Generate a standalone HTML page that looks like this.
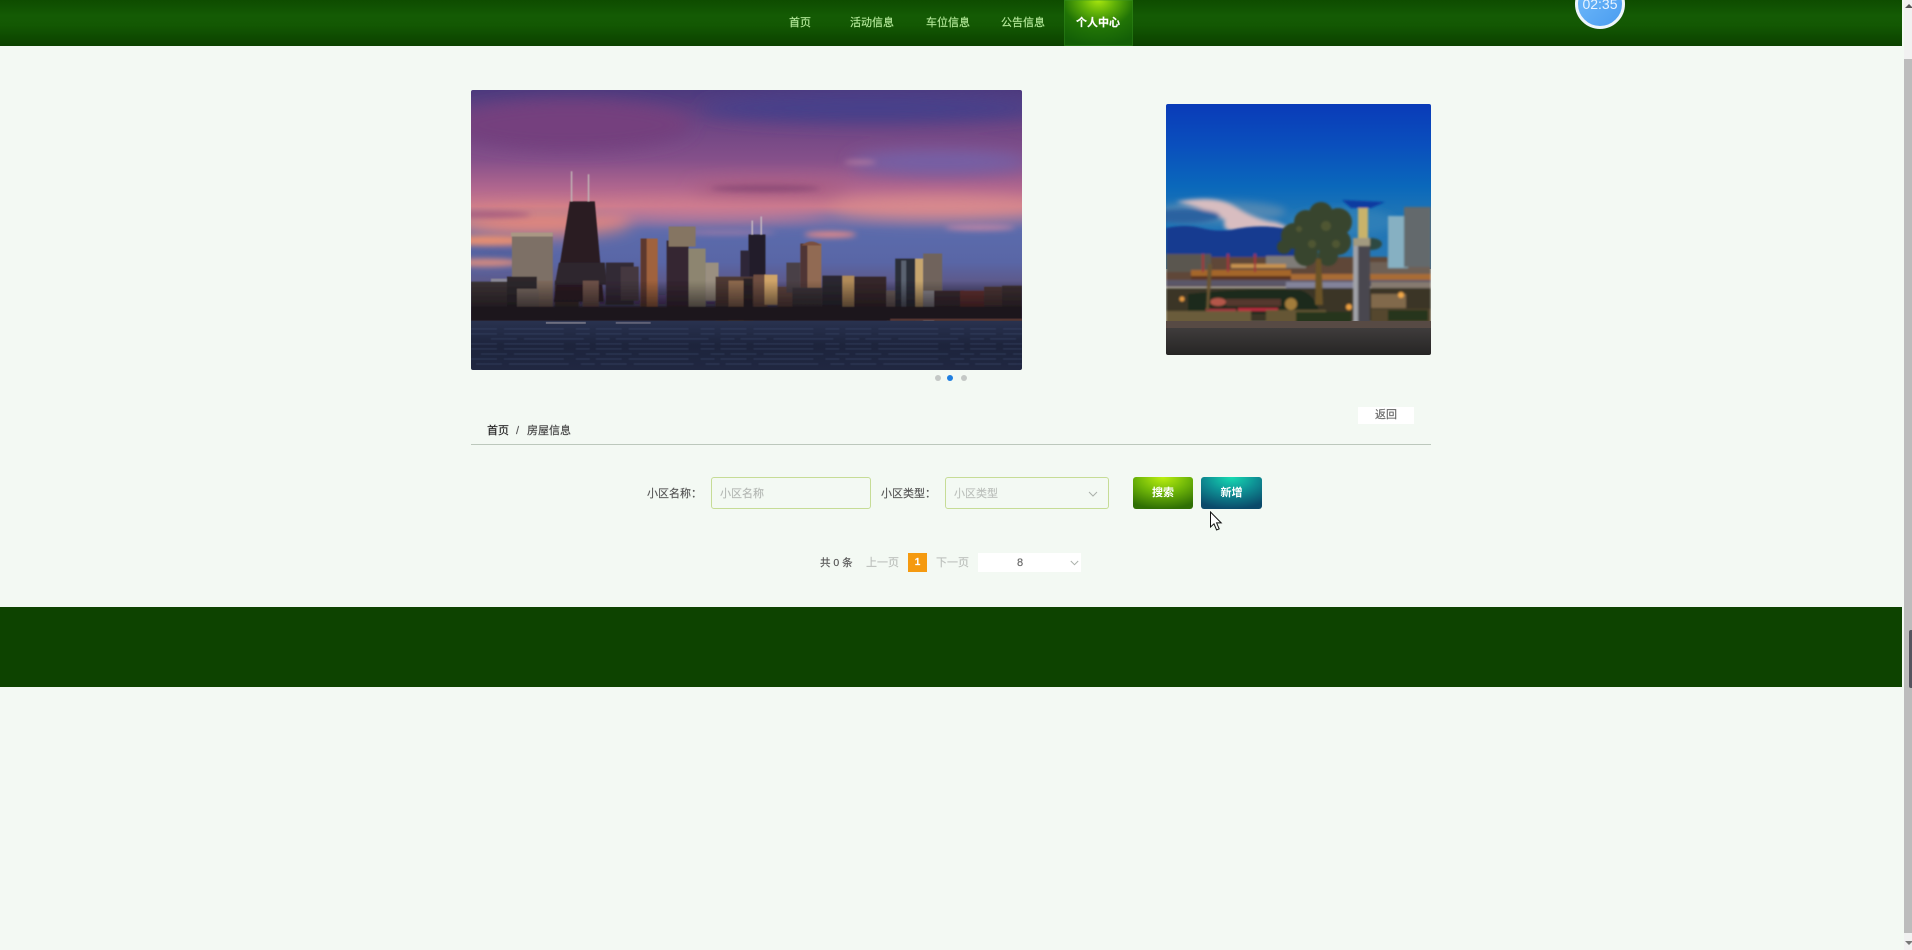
<!DOCTYPE html>
<html lang="zh-CN">
<head>
<meta charset="utf-8">
<title>房屋信息</title>
<style>
html,body{margin:0;padding:0;width:1912px;height:950px;overflow:hidden;background:#f3f9f3;font-family:"Liberation Sans","Noto Sans CJK SC",sans-serif;font-size:11px;color:#444}
.a{position:absolute;white-space:nowrap;line-height:16px;-webkit-text-stroke:.15px currentColor}
#hd{position:absolute;left:0;top:0;width:1902px;height:46px;background:linear-gradient(180deg,#0e4c00 0%,#145b04 35%,#135803 55%,#0e4a00 82%,#0c4200 100%)}
.nav{color:#b4e89a;top:15px}
#act{position:absolute;left:1064px;top:0;width:69px;height:46px;background:radial-gradient(ellipse 58px 46px at 50% 0,#a8e60e 0%,#5fb008 30%,#217406 62%,#135f06 100%);box-shadow:inset 0 0 0 1px rgba(60,150,40,.35)}
#clock{position:absolute;left:1575px;top:-21px;width:44px;height:44px;border:3px solid #eef6fb;border-radius:50%;background:linear-gradient(135deg,#72bcfb,#4a9cf0);color:#e9f4ff;font-size:14px;text-align:center;line-height:44px}
#sb{position:absolute;left:1904px;top:0;width:8px;height:950px;background:#f1f1f1}
#th{position:absolute;left:0;top:59px;width:8px;height:874px;background:#bcbcbc}
#g{position:absolute;left:5px;top:630px;width:3px;height:58px;background:#55555f;border-radius:2px 0 0 2px}
.ipt{position:absolute;top:477px;height:30px;border:1px solid #c6dc96;border-radius:3px;box-sizing:content-box}
.btn{position:absolute;top:477px;height:32px;border-radius:3px;color:#fff;text-align:center;line-height:33px;font-weight:bold}
.dot{position:absolute;top:375px;width:6px;height:6px;border-radius:50%;background:#c4c8c6}
svg{display:block}
</style>
</head>
<body>
<div id="hd"></div>
<div class="a nav" style="left:789px">首页</div>
<div class="a nav" style="left:850px">活动信息</div>
<div class="a nav" style="left:926px">车位信息</div>
<div class="a nav" style="left:1001px">公告信息</div>
<div id="act"></div>
<div class="a" style="left:1076px;top:15px;color:#fff;font-weight:bold">个人中心</div>
<div id="clock">02:35</div>

<div id="sb">
  <div style="position:absolute;left:1px;top:4px;width:0;height:0;border-left:4px solid transparent;border-right:4px solid transparent;border-bottom:4px solid #555"></div>
  <div id="th"></div>
  <div id="g"></div>
  <div style="position:absolute;left:1px;top:941px;width:0;height:0;border-left:4px solid transparent;border-right:4px solid transparent;border-top:4px solid #777"></div>
</div>

<!-- main slide -->
<svg style="position:absolute;left:471px;top:90px;border-radius:2px" width="551" height="280" viewBox="0 0 552 279" preserveAspectRatio="none">
  <defs>
    <linearGradient id="s1" x1="0" y1="0" x2="0" y2="1">
      <stop offset="0" stop-color="#4c3a7e"/><stop offset=".16" stop-color="#6f4684"/>
      <stop offset=".3" stop-color="#85508a"/><stop offset=".42" stop-color="#b0668e"/>
      <stop offset=".5" stop-color="#cc7c8c"/><stop offset=".54" stop-color="#8273a6"/>
      <stop offset=".6" stop-color="#5b6bac"/><stop offset=".74" stop-color="#5966a6"/>
      <stop offset=".82" stop-color="#5d5a8c"/><stop offset="1" stop-color="#3a3050"/>
    </linearGradient>
    <linearGradient id="w1" x1="0" y1="0" x2="0" y2="1">
      <stop offset="0" stop-color="#29324f"/><stop offset=".5" stop-color="#1d243c"/><stop offset="1" stop-color="#202741"/>
    </linearGradient>
    <linearGradient id="sh" x1="0" y1="0" x2="0" y2="1">
      <stop offset="0" stop-color="#120d12" stop-opacity="0"/><stop offset="1" stop-color="#120d12" stop-opacity=".85"/>
    </linearGradient>
    <filter id="b8" x="-20%" y="-20%" width="140%" height="140%"><feGaussianBlur stdDeviation="8"/></filter>
    <filter id="b3" x="-20%" y="-50%" width="140%" height="200%"><feGaussianBlur stdDeviation="3"/></filter>
    <filter id="b05"><feGaussianBlur stdDeviation=".6"/></filter>
  </defs>
  <rect width="552" height="232" fill="url(#s1)"/>
  <g filter="url(#b8)">
    <ellipse cx="400" cy="18" rx="170" ry="14" fill="#46408a"/>
    <ellipse cx="100" cy="35" rx="120" ry="25" fill="#75417e"/>
    <ellipse cx="470" cy="72" rx="90" ry="12" fill="#7461a6"/>
    <ellipse cx="470" cy="118" rx="110" ry="11" fill="#d88a8e"/>
    <ellipse cx="70" cy="132" rx="90" ry="14" fill="#e0867e"/>
    <ellipse cx="240" cy="122" rx="120" ry="8" fill="#cf7a92"/>
    <ellipse cx="30" cy="163" rx="40" ry="7" fill="#4d5c9a"/>
    <ellipse cx="300" cy="98" rx="80" ry="7" fill="#a65a80"/>
  </g>
  <g filter="url(#b3)">
    <ellipse cx="20" cy="124" rx="40" ry="3" fill="#a85c7e"/>
    <ellipse cx="295" cy="98" rx="55" ry="3" fill="#8a4a76"/>
    <ellipse cx="15" cy="172" rx="35" ry="4" fill="#d58a80"/>
    <ellipse cx="15" cy="150" rx="45" ry="5" fill="#e58e72"/>
    <ellipse cx="360" cy="144" rx="26" ry="3" fill="#e88a88"/>
    <ellipse cx="510" cy="137" rx="35" ry="3" fill="#b984a6"/>
    <ellipse cx="390" cy="72" rx="16" ry="2" fill="#b57ba0"/>
    <ellipse cx="255" cy="142" rx="50" ry="2" fill="#9b7aa8"/>
  </g>
  <g filter="url(#b05)">
    <rect x="20" y="188" width="16" height="10" fill="#8a8898"/>
    <rect x="41" y="142" width="41" height="50" fill="#7d6f66"/>
    <path d="M40 142h42v4H40z" fill="#a99784"/>
    <path d="M84 190h24v40h-24z" fill="#3a2c2c"/>
    <path d="M99 111h25l9 100H83z" fill="#2a1a22"/>
    <path d="M100 81h1.500v30H100zM117 84h1.500v27H117z" fill="#c0b2b4"/>
    <path d="M88 172h46l2 22H84z" fill="#2e262e"/>
    <rect x="112" y="190" width="16" height="26" fill="#6e5248"/>
    <rect x="135" y="172" width="28" height="42" fill="#332936"/>
    <rect x="150" y="176" width="18" height="34" fill="#44383f"/>
    <rect x="170" y="148" width="17" height="75" fill="#a0623c"/>
    <rect x="170" y="148" width="6" height="75" fill="#5d382e"/>
    <rect x="196" y="150" width="22" height="80" fill="#342530"/>
    <rect x="198" y="136" width="27" height="20" fill="#857462"/>
    <rect x="218" y="158" width="17" height="62" fill="#8d8570"/>
    <rect x="235" y="172" width="13" height="38" fill="#9a8f80"/>
    <rect x="278" y="144" width="17" height="42" fill="#241d2c"/>
    <rect x="270" y="160" width="9" height="26" fill="#2d2838"/>
    <path d="M281 130h1.500v14H281zM290 126h1.500v18H290z" fill="#c4b8c0"/>
    <rect x="245" y="186" width="38" height="46" fill="#4d3832"/>
    <rect x="258" y="190" width="15" height="40" fill="#8e6a4e"/>
    <rect x="273" y="188" width="9" height="40" fill="#2a2226"/>
    <rect x="283" y="184" width="14" height="42" fill="#6e4e40"/>
    <rect x="294" y="184" width="13" height="30" fill="#d0a468"/>
    <rect x="307" y="196" width="18" height="34" fill="#5d423c"/>
    <rect x="316" y="172" width="14" height="30" fill="#4a4046"/>
    <rect x="330" y="153" width="21" height="60" fill="#916a52"/>
    <rect x="330" y="153" width="7" height="60" fill="#4f3636"/>
    <path d="M331 155q10-8 20 0z" fill="#7a5040"/>
    <rect x="322" y="197" width="30" height="30" fill="#3a3438"/>
    <rect x="352" y="185" width="20" height="42" fill="#2b2830"/>
    <rect x="372" y="185" width="12" height="40" fill="#b08a58"/>
    <rect x="384" y="186" width="32" height="44" fill="#36272a"/>
    <rect x="416" y="200" width="14" height="30" fill="#6e605c"/>
    <rect x="425" y="168" width="20" height="64" fill="#2a2d38"/>
    <rect x="431" y="170" width="5" height="60" fill="#5a6270"/>
    <rect x="445" y="168" width="8" height="56" fill="#c7a66e"/>
    <rect x="453" y="163" width="19" height="50" fill="#70645c"/>
    <rect x="453" y="200" width="12" height="32" fill="#8d8a90"/>
    <rect x="464" y="200" width="30" height="32" fill="#3a2a30"/>
    <rect x="490" y="200" width="24" height="30" fill="#64302e"/>
    <rect x="514" y="196" width="18" height="36" fill="#4c3634"/>
    <rect x="532" y="195" width="20" height="37" fill="#3a2e30"/>
    <rect x="0" y="191" width="40" height="34" fill="#3a3234"/>
    <rect x="36" y="186" width="30" height="40" fill="#2d282c"/>
    <rect x="66" y="190" width="16" height="36" fill="#7e6a5c"/>
    <rect x="46" y="198" width="22" height="25" fill="#76685f"/>
    <rect y="190" width="552" height="38" fill="url(#sh)"/>
    <rect x="0" y="216" width="552" height="14" fill="#1c171b"/>
    <rect x="420" y="228" width="132" height="2" fill="#5d3a36"/>
  </g>
  <rect y="230" width="552" height="49" fill="url(#w1)"/>
  <g stroke="#46557a" stroke-width="1" opacity=".5" filter="url(#b05)" fill="none" stroke-dasharray="26 7 60 12 14 6">
    <path d="M0 238H552M0 243H552M20 248H552M0 253H552M0 258H552M10 263H552M0 268H552M5 273H552"/>
  </g>
  <rect x="75" y="231" width="40" height="2" fill="#8c8a96" opacity=".7"/>
  <rect x="145" y="231" width="35" height="2" fill="#777688" opacity=".7"/>
</svg>

<div class="dot" style="left:935px"></div>
<div class="dot" style="left:947px;background:#1f7ee0"></div>
<div class="dot" style="left:960.500px"></div>

<!-- side slide -->
<svg style="position:absolute;left:1166px;top:104px;border-radius:2px" width="265" height="251" viewBox="0 0 265 251">
  <defs>
    <linearGradient id="s2" x1="0" y1="0" x2="0" y2="1">
      <stop offset="0" stop-color="#0a3bb8"/><stop offset=".25" stop-color="#0a4fbd"/>
      <stop offset=".5" stop-color="#0a68bb"/><stop offset=".65" stop-color="#1d74b6"/><stop offset="1" stop-color="#2877b4"/>
    </linearGradient>
    <linearGradient id="g2" x1="0" y1="0" x2="0" y2="1">
      <stop offset="0" stop-color="#3f3c3c"/><stop offset="1" stop-color="#262524"/>
    </linearGradient>
    <filter id="c4" x="-30%" y="-60%" width="160%" height="220%"><feGaussianBlur stdDeviation="4"/></filter>
    <filter id="c2" x="-30%" y="-60%" width="160%" height="220%"><feGaussianBlur stdDeviation="2.200"/></filter>
    <filter id="c1" x="-5%" y="-5%" width="110%" height="110%"><feGaussianBlur stdDeviation="1"/></filter>
  </defs>
  <rect width="265" height="165" fill="url(#s2)"/>
  <g filter="url(#c4)">
    <ellipse cx="55" cy="108" rx="65" ry="11" fill="#4f87b4"/>
    <ellipse cx="175" cy="118" rx="55" ry="14" fill="#2f7fb8"/>
  </g>
  <g filter="url(#c2)">
    <path d="M10 98q40-8 60 5t40 15q10 3 14 8q-30 2-50 2t-15-12q-20-12-49-18z" fill="#d8bdc0"/>
    <ellipse cx="18" cy="112" rx="36" ry="7" fill="#2a62a0"/>
  </g>
  <g filter="url(#c1)">
    <path d="M0 124q20-4 35 0t30 2q25-6 50-2t30 30V165H0z" fill="#183a90"/>
    <rect x="222" y="145" width="20" height="15" fill="#1e5da6"/>
    <rect x="0" y="153" width="265" height="30" fill="#5e4638"/>
    <rect x="0" y="150" width="45" height="18" fill="#5a5650"/>
    <rect x="100" y="152" width="40" height="12" fill="#7f7c78"/>
    <rect x="25" y="166" width="100" height="6" fill="#a5662a"/>
    <rect x="65" y="160" width="55" height="4" fill="#c69250"/>
    <rect x="25" y="172" width="230" height="4" fill="#5c3420"/>
    <rect x="125" y="170" width="140" height="6" fill="#a96c36"/>
    <rect x="200" y="158" width="65" height="12" fill="#6e6054"/>
    <rect x="0" y="176" width="265" height="6" fill="#5a5668"/>
    <rect x="120" y="178" width="80" height="9" fill="#83839a"/>
    <rect x="205" y="178" width="60" height="12" fill="#867a70"/>
    <rect x="36" y="150" width="2" height="18" fill="#a3323a"/>
    <rect x="61" y="150" width="2" height="18" fill="#a3323a"/>
    <rect x="88" y="150" width="2" height="18" fill="#a3323a"/>
    <rect x="222" y="112" width="20" height="52" fill="#86b0c2"/>
    <rect x="238" y="103" width="27" height="60" fill="#64696c"/>
    <rect x="0" y="184" width="265" height="34" fill="#3a3428"/>
    <path d="M22 190q50-6 112-4q15 4 20 24H22z" fill="#1c2c1c"/>
    <rect x="60" y="195" width="55" height="7" fill="#54372e"/>
    <rect x="72" y="204" width="40" height="3" fill="#bb2b40"/>
    <rect x="40" y="205" width="30" height="3" fill="#a83242"/>
    <ellipse cx="52" cy="198" rx="8" ry="4" fill="#b45648"/>
    <path d="M0 207h85v14H0z" fill="#6b5c3a"/>
    <path d="M100 206h60v15h-60z" fill="#655634"/>
    <path d="M130 208h55v13h-55z" fill="#28351a"/>
    <path d="M205 205h60v14h-60z" fill="#54462f"/>
    <path d="M222 206h40v11h-40z" fill="#28361c"/>
    <rect x="205" y="190" width="35" height="14" fill="#81694c"/>
    <circle cx="235" cy="191" r="3" fill="#f0a848"/>
    <circle cx="183" cy="203" r="3" fill="#eda040"/>
    <circle cx="16" cy="195" r="2.500" fill="#e69a40"/>
    <circle cx="125" cy="200" r="6" fill="#a27c3a"/>
  </g>
  <g filter="url(#c1)">
    <g fill="#38442e">
      <circle cx="140" cy="118" r="12"/><circle cx="155" cy="110" r="12"/><circle cx="172" cy="118" r="14"/>
      <circle cx="128" cy="132" r="13"/><circle cx="150" cy="130" r="17"/><circle cx="172" cy="138" r="13"/>
      <circle cx="118" cy="143" r="7"/><circle cx="140" cy="150" r="12"/><circle cx="162" cy="152" r="10"/>
    </g>
    <g fill="#5b5f36" opacity=".7">
      <circle cx="160" cy="122" r="5"/><circle cx="146" cy="140" r="4"/><circle cx="170" cy="140" r="4"/><circle cx="133" cy="125" r="3"/>
    </g>
    <ellipse cx="205" cy="140" rx="11" ry="6" fill="#2f4a42"/>
    <path d="M150 155h5l2 46h-8z" fill="#6b5228"/>
    <path d="M42 160l-2 46h3l3-46z" fill="#6a5430"/>
    <path d="M176 96l43 2-14 6h-20z" fill="#0f3aa0"/>
    <path d="M192 104h10v36h-10z" fill="#c9b36a"/>
    <rect x="187" y="134" width="17" height="90" fill="#4a4650"/>
    <rect x="187" y="134" width="5" height="90" fill="#a0a2a8"/>
    <rect x="187" y="134" width="17" height="8" fill="#a39a80"/>
  </g>
  <rect y="217" width="265" height="8" fill="#574a44"/>
  <rect y="224" width="265" height="27" fill="url(#g2)"/>
</svg>

<!-- breadcrumb -->
<div class="a" style="left:487px;top:423px;color:#222">首页</div>
<div class="a" style="left:516px;top:423px;color:#555">/</div>
<div class="a" style="left:527px;top:423px;color:#444">房屋信息</div>
<div style="position:absolute;left:471px;top:443.500px;width:960px;height:1px;background:#bcc8bc"></div>
<div class="a" style="left:1358px;top:407px;width:56px;height:17px;background:#fff;text-align:center;line-height:17px;color:#666">返回</div>

<!-- search -->
<div class="a" style="left:647px;top:486px;color:#555">小区名称：</div>
<div class="ipt" style="left:711px;width:158px"></div>
<div class="a" style="left:720px;top:486px;color:#b4b8b4">小区名称</div>
<div class="a" style="left:881px;top:486px;color:#555">小区类型：</div>
<div class="ipt" style="left:945px;width:162px"></div>
<div class="a" style="left:954px;top:486px;color:#bcc0bc">小区类型</div>
<svg style="position:absolute;left:1088px;top:491px" width="10" height="6" viewBox="0 0 10 6"><path d="M1 1l4 4 4-4" fill="none" stroke="#aab0aa" stroke-width="1"/></svg>
<div class="btn" style="left:1133px;width:60px;background:radial-gradient(ellipse 52px 32px at 50% 0,#bcf010 0%,#6fb608 50%,#2f6f04 100%)">搜索</div>
<div class="btn" style="left:1201px;width:61px;background:radial-gradient(ellipse 52px 32px at 50% 0,#16dcb2 0%,#0e8f94 50%,#0b4a6a 100%)">新增</div>
<svg style="position:absolute;left:1209px;top:511px" width="14" height="21" viewBox="0 0 14 21"><path d="M1.500 1v15l3.500-3.200 2.600 6.200 2.600-1.100-2.600-6h4.600z" fill="#fff" stroke="#111" stroke-width="1"/></svg>

<!-- pagination -->
<div class="a" style="left:820px;top:555px;color:#555;font-size:10.500px">共 0 条</div>
<div class="a" style="left:866px;top:555px;color:#bcc0bc">上一页</div>
<div class="a" style="left:908px;top:553px;width:19px;height:19px;background:#f59a10;color:#fff;font-weight:bold;text-align:center;line-height:20px;font-size:10px">1</div>
<div class="a" style="left:936px;top:555px;color:#bcc0bc">下一页</div>
<div class="a" style="left:978px;top:553px;width:103px;height:19px;background:#fff"></div>
<div class="a" style="left:1017px;top:555px;color:#666">8</div>
<svg style="position:absolute;left:1070px;top:560px" width="9" height="6" viewBox="0 0 9 6"><path d="M.8 1l3.700 3.700L8.200 1" fill="none" stroke="#aab0aa" stroke-width="1"/></svg>

<div style="position:absolute;left:0;top:607px;width:1902px;height:80px;background:#0d4300"></div>
</body>
</html>
